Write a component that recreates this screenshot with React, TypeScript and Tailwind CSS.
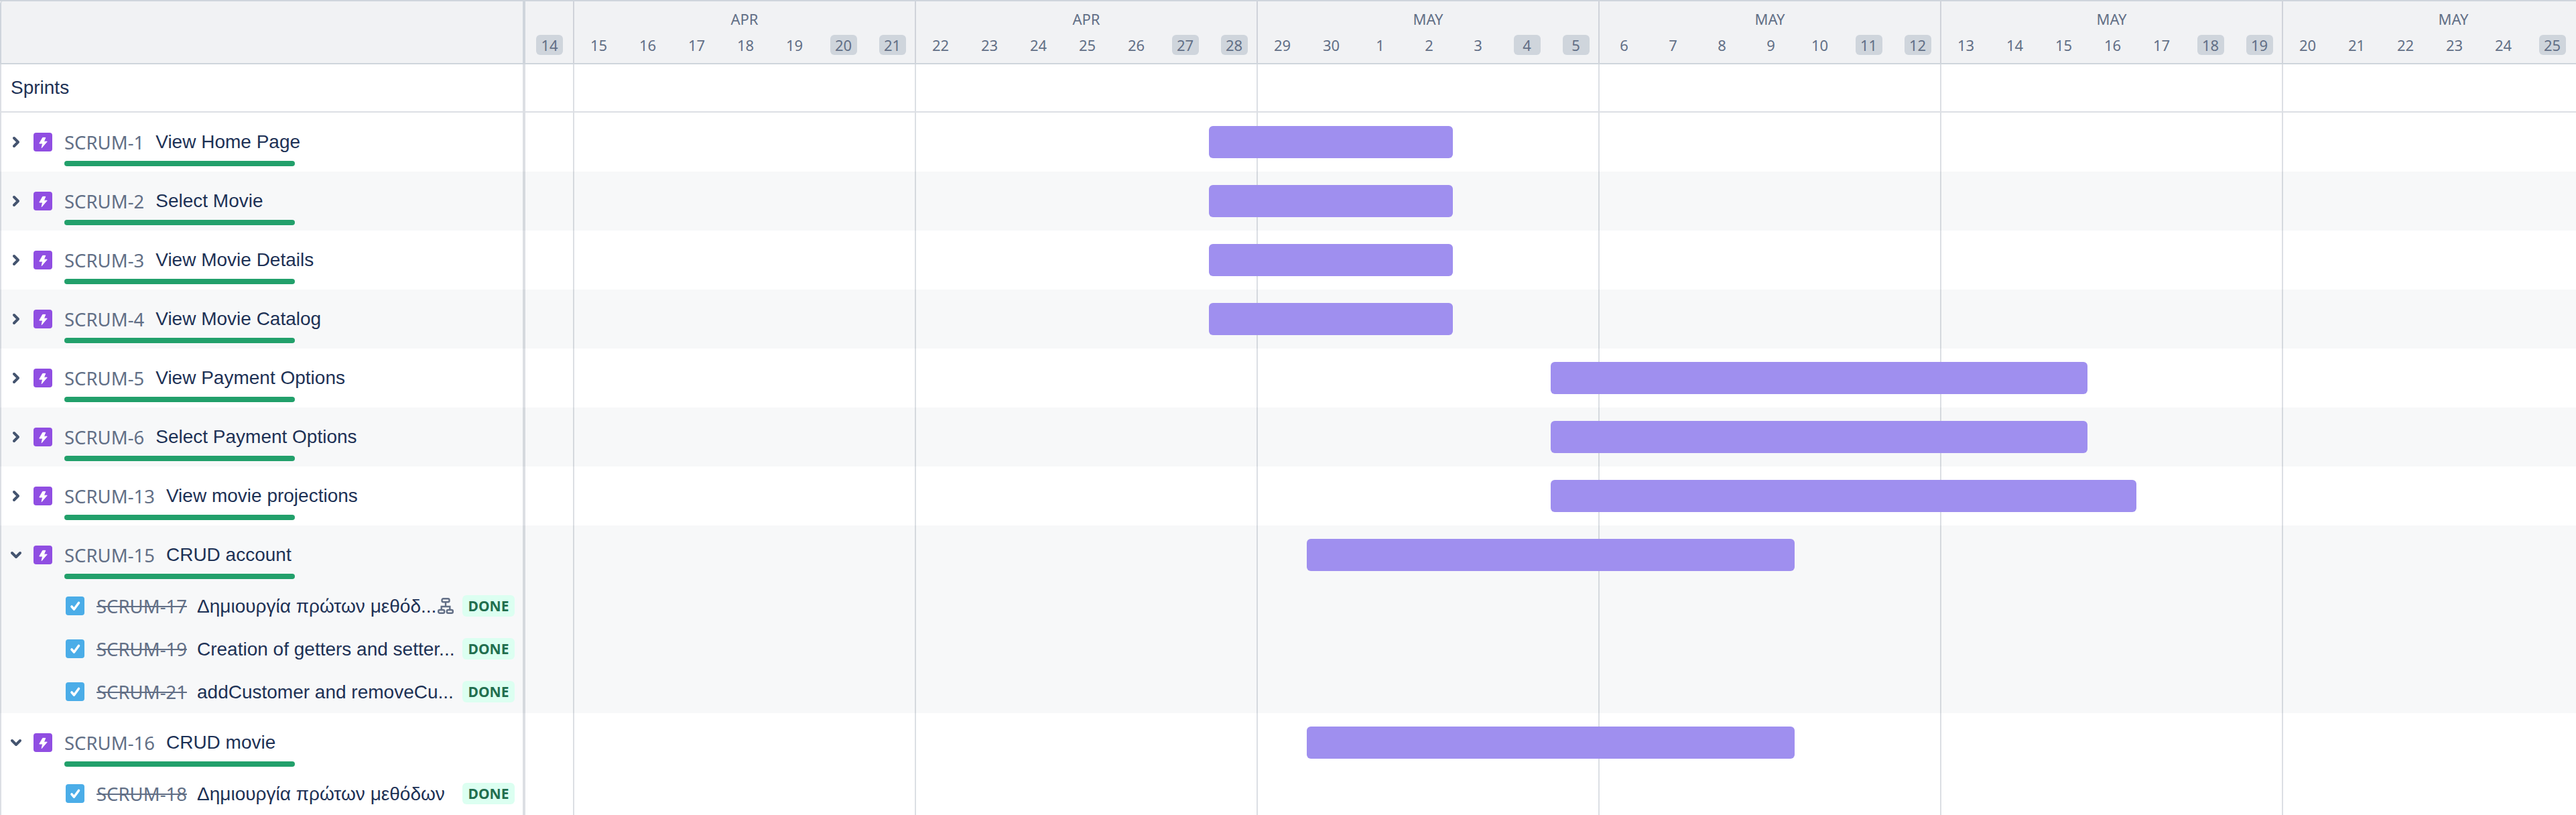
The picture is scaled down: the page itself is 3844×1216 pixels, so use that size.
const weeks = [
  { month: "APR", days: ["15", "16", "17", "18", "19", "20", "21"] },
  { month: "APR", days: ["22", "23", "24", "25", "26", "27", "28"] },
  { month: "MAY", days: ["29", "30", "1", "2", "3", "4", "5"] },
  { month: "MAY", days: ["6", "7", "8", "9", "10", "11", "12"] },
  { month: "MAY", days: ["13", "14", "15", "16", "17", "18", "19"] },
  { month: "MAY", days: ["20", "21", "22", "23", "24", "25"] },
];

const epics = [
  { id: "SCRUM-1", title: "View Home Page", bar: "left-[1020px] w-[364px]" },
  { id: "SCRUM-2", title: "Select Movie", bar: "left-[1020px] w-[364px]" },
  { id: "SCRUM-3", title: "View Movie Details", bar: "left-[1020px] w-[364px]" },
  { id: "SCRUM-4", title: "View Movie Catalog", bar: "left-[1020px] w-[364px]" },
  { id: "SCRUM-5", title: "View Payment Options", bar: "left-[1530px] w-[801px]" },
  { id: "SCRUM-6", title: "Select Payment Options", bar: "left-[1530px] w-[801px]" },
  { id: "SCRUM-13", title: "View movie projections", bar: "left-[1530px] w-[874px]" },
  {
    id: "SCRUM-15",
    title: "CRUD account",
    bar: "left-[1166px] w-[728px]",
    open: true,
    tasks: [
      { id: "SCRUM-17", title: "Δημιουργία πρώτων μεθόδ...", child: true },
      { id: "SCRUM-19", title: "Creation of getters and setter..." },
      { id: "SCRUM-21", title: "addCustomer and removeCu..." },
    ],
  },
  {
    id: "SCRUM-16",
    title: "CRUD movie",
    bar: "left-[1166px] w-[728px]",
    open: true,
    tasks: [{ id: "SCRUM-18", title: "Δημιουργία πρώτων μεθόδων" }],
  },
];

const Chevron = ({ open }: { open?: boolean }) => (
  <svg viewBox="0 0 24 24" className="w-[24px] h-[24px] shrink-0 mt-[8px] ml-[10px]" fill="none" stroke="#44546f" strokeWidth="4" strokeLinecap="round" strokeLinejoin="round">
    {open ? <polyline points="6,9 12,15 18,9" /> : <polyline points="9,6 15,12 9,18" />}
  </svg>
);

const EpicIcon = () => (
  <div className="w-[28px] h-[28px] shrink-0 mt-[6px] ml-[14px] rounded-[4px] bg-[#904ee2]">
    <svg viewBox="0 0 28 28" className="w-[28px] h-[28px]" fill="#ffffff" stroke="#ffffff" strokeWidth="1" strokeLinejoin="round">
      <polygon points="13.7,7.4 17.8,7.4 15.4,13.2 20.2,13.2 12.2,22.6 13.6,16 8.8,16" />
    </svg>
  </div>
);

const TaskIcon = () => (
  <div className="w-[28px] h-[28px] shrink-0 rounded-[4px] bg-[#4bade8]">
    <svg viewBox="0 0 28 28" className="w-[28px] h-[28px]" fill="none" stroke="#ffffff" strokeWidth="3.6" strokeLinecap="round" strokeLinejoin="round">
      <polyline points="9,15 12.5,19 19.5,9.5" />
    </svg>
  </div>
);

const ChildIcon = () => (
  <svg viewBox="0 0 24 24" className="w-[24px] h-[24px] shrink-0" fill="none" stroke="#626f86" strokeWidth="2.4">
    <rect x="6.5" y="1.2" width="11" height="5" rx="2" />
    <rect x="1.2" y="18" width="9" height="4.8" rx="2" />
    <rect x="13.8" y="18" width="9" height="4.8" rx="2" />
    <path d="M12 6.5V13M5.7 18V13H18.3V18" />
  </svg>
);

// week grid lines behind the bars, repeated on every row
function Timeline({ bar }: { bar?: string }) {
  return (
    <div className="relative flex flex-1 h-full">
      <div className="w-[71px] shrink-0" />
      {weeks.map((_, i) => (
        <div key={i} className="w-[510px] shrink-0 border-l-2 border-[#091e4224]" />
      ))}
      {bar && <div className={`absolute top-[20px] h-[48px] rounded-[6px] bg-[#9f8fef] ${bar}`} />}
    </div>
  );
}

function Day({ day, off }: { day: string; off: boolean }) {
  return (
    <div className={`w-[40px] h-[30px] rounded-[6px] flex items-center justify-center text-[22px] text-[#626f86] font-['Noto_Sans',sans-serif] ${off ? "bg-[#cfd5dc]" : ""}`}>
      {day}
    </div>
  );
}

function Header() {
  return (
    <div className="flex h-[96px] border-y-2 border-[#cfd5dc] bg-[#f1f2f4]">
      <div className="w-[784px] shrink-0 border-l-2 border-r-4 border-[#cfd5dc] rounded-tl-[4px]" />
      <div className="w-[71px] shrink-0 pt-[50px] pl-[16px]">
        <Day day="14" off />
      </div>
      {weeks.map((w, i) => (
        <div key={i} className="w-[510px] shrink-0 border-l-2 border-[#091e4224]">
          <div className="h-[50px] pt-[2px] flex items-center justify-center text-[22px] text-[#626f86] font-['Noto_Sans',sans-serif]">{w.month}</div>
          <div className="grid grid-cols-[repeat(7,73px)]">
            {w.days.map((d, j) => (
              <div key={d} className="flex justify-center">
                <Day day={d} off={j >= 5} />
              </div>
            ))}
          </div>
        </div>
      ))}
    </div>
  );
}

function EpicRow({ id, title, bar, open }: { id: string; title: string; bar: string; open?: boolean }) {
  return (
    <div className="flex h-[88px]">
      <div className="w-[784px] shrink-0 border-l-2 border-r-4 border-[#091e4224] flex pt-[24px]">
        <Chevron open={open} />
        <EpicIcon />
        <div className="ml-[18px] flex flex-col">
          <div className="h-[40px] flex items-center gap-[17px] whitespace-nowrap">
            <span className="text-[27.5px] text-[#626f86] font-['Noto_Sans',sans-serif] mt-[2px]">{id}</span>
            <span className="text-[28px] text-[#1d3155] font-['Liberation_Sans',sans-serif] -mt-[1px]">{title}</span>
          </div>
          <div className="mt-[8px] w-[344px] h-[8px] rounded-full bg-[#22a06b]" />
        </div>
      </div>
      <Timeline bar={bar} />
    </div>
  );
}

function TaskRow({ id, title, child }: { id: string; title: string; child?: boolean }) {
  return (
    <div className="flex h-[64px]">
      <div className="w-[784px] shrink-0 border-l-2 border-r-4 border-[#091e4224] flex items-center pl-[96px]">
        <TaskIcon />
        <span className="ml-[18px] w-[150px] shrink-0 text-[27.5px] text-[#626f86] line-through font-['Noto_Sans',sans-serif] mt-[1px]">{id}</span>
        <span className={`text-[28px] text-[#1d3155] whitespace-nowrap font-['Liberation_Sans',sans-serif] mt-[1px] ${child ? "w-[359px]" : "w-[383px]"}`}>{title}</span>
        {child && <ChildIcon />}
        <span className="ml-auto mr-[12px] w-[78px] h-[32px] pt-[1px] rounded-[6px] bg-[#dcfff1] flex items-center justify-center text-[21px] font-bold text-[#216e4e] font-['Noto_Sans',sans-serif]">DONE</span>
      </div>
      <Timeline />
    </div>
  );
}

export default function App() {
  return (
    <div className="w-[3844px] h-[1216px] overflow-hidden bg-white">
      <Header />
      <div className="flex h-[72px] border-b-2 border-[#dcdfe4]">
        <div className="w-[784px] shrink-0 border-l-2 border-r-4 border-[#091e4224] flex items-center pl-[14px] text-[28px] text-[#1d3155] font-['Liberation_Sans',sans-serif]">
          Sprints
        </div>
        <Timeline />
      </div>
      {epics.map((e, i) => (
        <div key={e.id} className={i % 2 === 1 ? "bg-[#f7f8f9]" : "bg-white"}>
          <EpicRow id={e.id} title={e.title} bar={e.bar} open={e.open} />
          {e.tasks?.map((t) => (
            <TaskRow key={t.id} id={t.id} title={t.title} child={t.child} />
          ))}
        </div>
      ))}
    </div>
  );
}
